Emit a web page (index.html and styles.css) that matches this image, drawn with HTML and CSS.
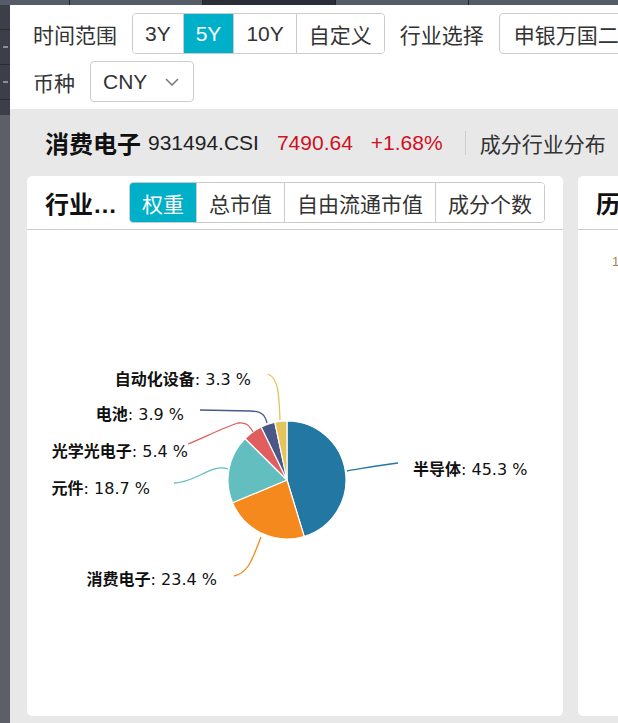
FILE: index.html
```html
<!DOCTYPE html>
<html lang="zh-CN">
<head>
    <meta charset="UTF-8">
    <meta name="viewport" content="width=device-width, initial-scale=1.0">
    <title>消费电子 成分行业分布</title>
    <link rel="stylesheet" href="styles.css">
</head>
<body>
    <div class="tab-strip">
        <span class="strip-tab"></span>
        <span class="strip-tab"></span>
        <span class="strip-tab strip-tab-active"></span>
        <span class="strip-tab"></span>
        <span class="strip-tab strip-tab-last"></span>
    </div>
    <div class="shell">
        <aside class="rail">
            <div class="rail-top">
                <div class="rail-item"></div>
                <div class="rail-item"><span class="rail-mark"></span></div>
                <div class="rail-item"><span class="rail-mark"></span></div>
            </div>
        </aside>
        <main class="main">
            <div class="filters">
                <div class="filter-row">
                    <span class="filter-label">时间范围</span>
                    <div class="btn-group">
                        <button class="btn">3Y</button>
                        <button class="btn btn-active">5Y</button>
                        <button class="btn">10Y</button>
                        <button class="btn">自定义</button>
                    </div>
                    <span class="filter-label">行业选择</span>
                    <div class="select select-wide">申银万国二级行业</div>
                </div>
                <div class="filter-row">
                    <span class="filter-label">币种</span>
                    <div class="select select-small">
                        CNY
                        <svg class="chevron" width="14" height="8" viewBox="0 0 14 8">
                            <path d="M1 1 L7 7 L13 1" fill="none" stroke="#777" stroke-width="1.5"/>
                        </svg>
                    </div>
                </div>
            </div>

            <div class="summary">
                <span class="index-name">消费电子</span>
                <span class="index-code">931494.CSI</span>
                <span class="index-up">7490.64</span>
                <span class="index-up">+1.68%</span>
                <span class="divider"></span>
                <span class="summary-tag">成分行业分布</span>
            </div>

            <div class="panels">
                <section class="card">
                    <div class="card-head">
                        <h3 class="card-title">行业权重分布</h3>
                        <div class="btn-group">
                            <button class="btn btn-active">权重</button>
                            <button class="btn">总市值</button>
                            <button class="btn">自由流通市值</button>
                            <button class="btn">成分个数</button>
                        </div>
                    </div>
                    <div class="card-body">
                        <svg class="pie" width="536" height="486" viewBox="0 0 536 486">
                            <!-- slices, clockwise from 12 o'clock -->
                            <g stroke="#fff" stroke-width="1.2" stroke-linejoin="round">
                                <path d="M260 250 L260 191 A59 59 0 0 1 277.17 306.45 Z" fill="#2277a3"/>
                                <path d="M260 250 L277.17 306.45 A59 59 0 0 1 205.56 272.75 Z" fill="#f5891e"/>
                                <path d="M260 250 L205.56 272.75 A59 59 0 0 1 218.02 208.54 Z" fill="#62bebf"/>
                                <path d="M260 250 L218.02 208.54 A59 59 0 0 1 234.21 196.94 Z" fill="#e05e5e"/>
                                <path d="M260 250 L234.21 196.94 A59 59 0 0 1 247.85 192.26 Z" fill="#4b5887"/>
                                <path d="M260 250 L247.85 192.26 A59 59 0 0 1 260 191 Z" fill="#e5c45c"/>
                            </g>
                            <!-- label guide lines -->
                            <g fill="none" stroke-width="1.3">
                                <path d="M320 241 C 338 238, 353 235, 371 233" stroke="#2277a3"/>
                                <path d="M234 307 C 226 327, 222 343, 207 346" stroke="#f5891e"/>
                                <path d="M201 239 C 185 233, 168 253, 147 253" stroke="#62bebf"/>
                                <path d="M226 202 C 222 195, 219 192, 211 193 C 198 197, 178 207, 161 214" stroke="#e05e5e"/>
                                <path d="M240 193 C 238 185, 235 181, 223 181 L 173 180" stroke="#4b5887"/>
                                <path d="M253 190 C 252 166, 252 149, 241 144" stroke="#e5c45c"/>
                            </g>
                            <g class="pie-label">
                                <text x="386" y="245"><tspan class="pie-name">半导体</tspan>: 45.3 %</text>
                                <text x="190" y="355" text-anchor="end"><tspan class="pie-name">消费电子</tspan>: 23.4 %</text>
                                <text x="123" y="264" text-anchor="end"><tspan class="pie-name">元件</tspan>: 18.7 %</text>
                                <text x="161" y="227" text-anchor="end"><tspan class="pie-name">光学光电子</tspan>: 5.4 %</text>
                                <text x="157" y="190" text-anchor="end"><tspan class="pie-name">电池</tspan>: 3.9 %</text>
                                <text x="224" y="155" text-anchor="end"><tspan class="pie-name">自动化设备</tspan>: 3.3 %</text>
                            </g>
                        </svg>
                    </div>
                </section>
                <section class="card">
                    <div class="card-head">
                        <h3 class="card-title">历史行业权重走势</h3>
                    </div>
                    <div class="card-body">
                        <span class="axis-tick">1</span>
                    </div>
                </section>
            </div>
        </main>
    </div>
</body>
</html>
```

FILE: styles.css
```css
* {
    box-sizing: border-box;
}
body {
    margin: 0;
    width: 618px;
    height: 723px;
    overflow: hidden;
    background-color: #e8e8e8;
    font-family: "Liberation Sans", "Noto Sans CJK SC", sans-serif;
    color: #333;
}

/* host app tab strip */
.tab-strip {
    display: flex;
    height: 5px;
    background-color: #555c67;
}
.strip-tab {
    width: 133px;
    border-right: 1px solid #23262c;
    background-color: #555c67;
}
.strip-tab:first-child {
    width: 70px;
}
.strip-tab-active {
    background-color: #2b2e38;
}
.strip-tab-last {
    flex: 1;
    border-right: none;
}

.shell {
    display: flex;
    height: 718px;
}
.rail {
    width: 10px;
    flex-shrink: 0;
    background-color: #5e5e69;
}
.rail-top {
    height: 110px;
    background-color: #3c3f4a;
}
.rail-item {
    height: 35px;
    border-bottom: 1px solid #2a2c33;
    position: relative;
}
.rail-item:first-child {
    height: 25px;
}
.rail-mark {
    position: absolute;
    left: 3px;
    top: 16px;
    width: 5px;
    height: 2px;
    background-color: #8b8e96;
}
.main {
    flex: 1;
    min-width: 0;
    overflow: hidden;
}

/* filter bar */
.filters {
    background-color: #fff;
    padding: 8px 0 7px 23px;
    display: flex;
    flex-direction: column;
    gap: 7px;
}
.filter-row {
    display: flex;
    align-items: center;
    gap: 15px;
    height: 41px;
    white-space: nowrap;
}
.filter-label {
    font-size: 21px;
    color: #333;
}
.btn-group {
    display: flex;
    flex-shrink: 0;
    height: 41px;
    border: 1px solid #ccc;
    border-radius: 4px;
    overflow: hidden;
}
.btn {
    font-family: inherit;
    font-size: 21px;
    color: #333;
    background-color: #fff;
    border: none;
    border-left: 1px solid #ccc;
    padding: 0 12px;
    cursor: pointer;
}
.btn:first-child {
    border-left: none;
}
.btn-active {
    background-color: #00afc8;
    color: #fff;
}
.select {
    display: flex;
    align-items: center;
    flex-shrink: 0;
    height: 41px;
    border: 1px solid #ccc;
    border-radius: 4px;
    font-size: 21px;
    color: #333;
    background-color: #fff;
}
.select-wide {
    width: 220px;
    padding-left: 14px;
}
.select-small {
    width: 104px;
    padding-left: 12px;
    gap: 18px;
}

/* index summary line */
.summary {
    height: 67px;
    display: flex;
    align-items: center;
    padding-left: 35px;
    white-space: nowrap;
}
.index-name {
    font-size: 24px;
    font-weight: bold;
    color: #111;
    margin-right: 7px;
}
.index-code {
    font-size: 21px;
    color: #222;
    margin-right: 18px;
}
.index-up {
    font-size: 21px;
    color: #d0101e;
    margin-right: 18px;
}
.divider {
    width: 1px;
    height: 24px;
    background-color: #ccc;
    margin: 0 14px 0 4px;
}
.summary-tag {
    font-size: 21px;
    color: #333;
}

/* chart cards */
.panels {
    display: flex;
    gap: 15px;
    padding-left: 17px;
}
.card {
    width: 536px;
    height: 540px;
    flex-shrink: 0;
    background-color: #fff;
    border-radius: 5px;
    overflow: hidden;
}
.card-head {
    display: flex;
    align-items: center;
    gap: 12px;
    height: 54px;
    padding: 0 18px;
    border-bottom: 1px solid #ccc;
}
.card-title {
    flex: 1;
    min-width: 0;
    margin: 0;
    font-size: 24px;
    font-weight: bold;
    color: #111;
    white-space: nowrap;
    overflow: hidden;
    text-overflow: ellipsis;
}
.card-body {
    position: relative;
    height: 486px;
}
.pie {
    display: block;
}
.pie-label {
    font-family: "DejaVu Sans", "Noto Sans CJK SC", sans-serif;
    font-size: 16px;
    fill: #111;
}
.pie-name {
    font-family: "Noto Sans CJK SC", sans-serif;
    font-weight: bold;
}
.axis-tick {
    display: block;
    padding: 24px 0 0 34px;
    font-size: 13px;
    color: #a3844f;
}
```
